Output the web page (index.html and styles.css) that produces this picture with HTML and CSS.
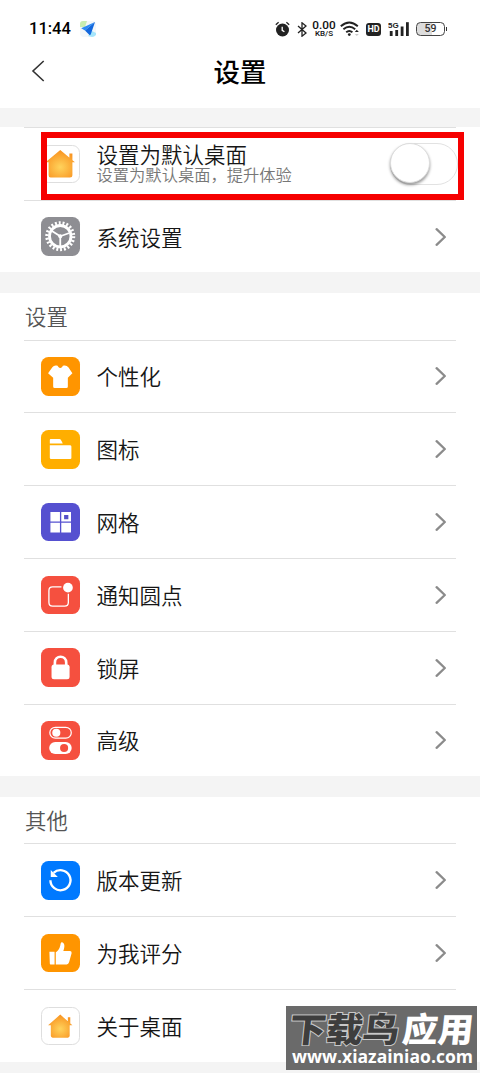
FILE: index.html
```html
<!DOCTYPE html>
<html lang="zh-CN">
<head>
<meta charset="utf-8">
<title>设置</title>
<link rel="stylesheet" href="styles.css">
</head>
<body>
<svg width="0" height="0" class="defs">
  <defs>
    <radialGradient id="glow" cx=".5" cy=".62" r=".6"><stop offset="0" stop-color="#ffd35c"/><stop offset="1" stop-color="#f99421"/></radialGradient>
    <symbol id="chev" viewBox="0 0 12 20"><path d="M1.6 2.2 L9.8 10 L1.6 17.8" fill="none" stroke="#8b8b8b" stroke-width="2.3" stroke-linecap="round" stroke-linejoin="round"/></symbol>
  </defs>
</svg>
<div class="phone">
  <header class="status">
    <span class="time">11:44</span>
    <svg class="plane" width="18" height="18" viewBox="0 0 18 18"><rect x="1" y="1" width="16" height="16" rx="4" fill="#f3f7fa"/><path d="M1 7V4Q1 1 4 1h4L6 7z" fill="#c8edb0"/><path d="M9 16l4-5 4 2v2q-2 2-4 2z" fill="#a5e5fb"/><path d="M16 2L2.2 8.3 6 10.6z" fill="#2a8cf5"/><path d="M16 2L6 10.6l4.2 4.2q1.3.6 1.7-.8z" fill="#1267dd"/></svg>
    <div class="indicators">
      <svg class="alarm" width="15" height="16" viewBox="0 0 15 16"><circle cx="7.5" cy="9" r="6.5" fill="#222"/><path d="M.8 3.7L3.6 1.3M14.2 3.7L11.4 1.3" stroke="#222" stroke-width="1.3"/><path d="M7.2 5.7v3.6l2.2 1.5" fill="none" stroke="#fff" stroke-width="1.3"/></svg>
      <svg class="bt" width="10" height="15" viewBox="0 0 10 15"><path d="M1 4l8 7-4 3.2V.8L9 4l-8 7" fill="none" stroke="#222" stroke-width="1.3"/></svg>
      <span class="speed"><b>0.00</b><i>KB/S</i></span>
      <svg class="wifi" width="20" height="16" viewBox="0 0 20 16"><g fill="none" stroke="#222" stroke-width="1.9"><path d="M.8 5.3q8.5-7.6 17 0"/><path d="M3.4 8.3q5.9-5.1 11.8 0"/><path d="M6.2 11.3q3.1-2.6 6.2 0"/></g><circle cx="9.3" cy="13.6" r="1.4" fill="#222"/><path d="M14.8 11l2-2.2 2 2.2z" fill="#222"/><path d="M14.8 13l2 2 2-2z" fill="#ccc"/></svg>
      <span class="hd">HD</span>
      <svg class="signal" width="22" height="16" viewBox="0 0 22 16"><g fill="#222"><rect x="1.8" y="10" width="2.8" height="5"/><rect x="7.3" y="9" width="2.8" height="6"/><rect x="12.7" y="5.5" width="2.8" height="9.5"/><rect x="18" y="1.2" width="2.8" height="13.8"/></g><text x="0" y="7.4" class="gen">5G</text></svg>
      <span class="battery">59</span>
    </div>
  </header>
  <nav class="bar">
    <svg class="back" width="14" height="22" viewBox="0 0 14 22"><path d="M12.7 1L2 11l10.7 10" fill="none" stroke="#333" stroke-width="1.6"/></svg>
    <h1>设置</h1>
  </nav>

  <section class="group first">
    <div class="row">
      <span class="icon white"><svg viewBox="0 0 38 38"><path d="M28 8.5h3v8h-3zM19 5L33.5 17H31V29.5Q31 32 28.5 32H9.5Q7.5 32 7.5 29.5V17H4.5z" fill="url(#glow)"/></svg></span>
      <div class="label"><span>设置为默认桌面</span><small>设置为默认桌面，提升体验</small></div>
      <span class="switch"><span class="knob"></span></span>
      <div class="highlight"></div>
    </div>
    <div class="row">
      <span class="icon gray"><svg viewBox="0 0 38 38" fill="none" stroke="#fff"><circle cx="19" cy="19" r="13.2" stroke-width="3.2" stroke-dasharray="1.9 1.87"/><circle cx="19" cy="19" r="10.6" stroke-width="2.8"/><path d="M19 19L10.8 13.8M19 19L28 15.8M19 19V29" stroke-width="1.8"/><circle cx="19" cy="19" r="1.5" fill="#fff"/></svg></span>
      <div class="label">系统设置</div><svg class="chev"><use href="#chev"/></svg>
    </div>
  </section>

  <section class="group">
    <h2>设置</h2>
    <div class="row"><span class="icon orange"><svg viewBox="0 0 38 38"><path d="M14.5 8.4Q16.5 8 17 9.5 19 12 21 9.5 21.5 8 23.5 8.4 25.5 8.6 27 10L31 16 26.5 20.5V29Q26.5 30.5 25 30.5H13.5Q12 30.5 12 29V20.5L7 16 11.2 10Q12.5 8.6 14.5 8.4z" fill="#fff"/></svg></span><div class="label">个性化</div><svg class="chev"><use href="#chev"/></svg></div>
    <div class="row"><span class="icon amber"><svg viewBox="0 0 38 38" fill="#fff"><path d="M8.7 9.8Q8.7 9 9.5 9H18Q19.3 9 20 10.4L21.5 13.4H8.7zM8.7 15H28.5Q30 15 30 16.3V27.6Q30 28.7 28.8 28.7H10Q8.7 28.7 8.7 27.4z"/></svg></span><div class="label">图标</div><svg class="chev"><use href="#chev"/></svg></div>
    <div class="row"><span class="icon purple"><svg viewBox="0 0 38 38"><path d="M9.3 9h9.4v9.3H9.3zM20 9h9.6v9.3H20zM9.3 19.6h9.4v9.6H9.3zM20 19.6h9.6v9.6H20z" fill="#fff"/><path d="M22.8 11.8h4.2v4.2h-4.2z" fill="#5550c8"/></svg></span><div class="label">网格</div><svg class="chev"><use href="#chev"/></svg></div>
    <div class="row"><span class="icon red"><svg viewBox="0 0 38 38"><path d="M20.2 10.8H11.5Q7.8 10.8 7.8 14.5V26Q7.8 29.8 11.5 29.8H23.3Q27 29.8 27 26V17.5" fill="none" stroke="#fff" stroke-width="1.3"/><circle cx="26.6" cy="11.5" r="4.8" fill="#fff"/></svg></span><div class="label">通知圆点</div><svg class="chev"><use href="#chev"/></svg></div>
    <div class="row"><span class="icon red"><svg viewBox="0 0 38 38"><rect x="10.4" y="16.4" width="17.8" height="14.4" rx="2.5" fill="#fff"/><path d="M13.7 18V14.5C13.7 6.7 24.9 6.7 24.9 14.5V18" fill="none" stroke="#fff" stroke-width="2.6"/></svg></span><div class="label">锁屏</div><svg class="chev"><use href="#chev"/></svg></div>
    <div class="row"><span class="icon red"><svg viewBox="0 0 38 38"><rect x="8.7" y="6.2" width="21.2" height="10.8" rx="5.4" fill="none" stroke="#fff" stroke-width="1.2"/><circle cx="15.1" cy="11.6" r="4" fill="#fff"/><rect x="8.1" y="20.8" width="22.2" height="11.8" rx="5.9" fill="#fff"/><circle cx="22.8" cy="26.7" r="4" fill="#f5503f"/></svg></span><div class="label">高级</div><svg class="chev"><use href="#chev"/></svg></div>
  </section>

  <section class="group last">
    <h2>其他</h2>
    <div class="row"><span class="icon blue"><svg viewBox="0 0 38 38"><path d="M12.4 11.8A9.9 9.9 0 1 1 9.3 19" fill="none" stroke="#fff" stroke-width="2.3"/><path d="M9.6 9V15.8H16.6z" fill="#fff"/></svg></span><div class="label">版本更新</div><svg class="chev"><use href="#chev"/></svg></div>
    <div class="row"><span class="icon orange"><svg viewBox="0 0 38 38" fill="#fff"><path d="M8.3 17.5H13.4V30H9.4Q8.8 30 8.7 29zM14.6 18C18 16 18.8 12.5 19.2 10.3 19.5 8 21 7.8 22 8.8 24 10.8 22.8 14.5 22 16.8H28.8Q30.6 17 30.2 19L27.7 28Q27.1 30 25.4 30H14.6z"/></svg></span><div class="label">为我评分</div><svg class="chev"><use href="#chev"/></svg></div>
    <div class="row"><span class="icon white"><svg viewBox="0 0 38 38"><path d="M26.5 10h2.4v7h-2.4zM19 7.5L31 18H28.3V28.5Q28.3 30.3 26.5 30.3H11.5Q9.7 30.3 9.7 28.5V18H7z" fill="url(#glow)"/></svg></span><div class="label">关于桌面</div></div>
  </section>

  <div class="watermark">
    <svg width="191" height="64" viewBox="0 0 191 64">
      <g transform="skewX(-6)"><text x="6" y="36" class="wm dark" textLength="110" lengthAdjust="spacingAndGlyphs">下载鸟</text><text x="119" y="36" class="wm light" textLength="71" lengthAdjust="spacingAndGlyphs">应用</text></g>
      <text x="6" y="57" class="url" textLength="181" lengthAdjust="spacingAndGlyphs">www.xiazainiao.com</text>
    </svg>
  </div>
</div>
</body>
</html>
```

FILE: styles.css
```css
* { box-sizing: border-box; }
body { margin: 0; background: #f4f4f4; font-family: "Noto Sans CJK SC", sans-serif; color: #161616; }
.defs { display: block; position: absolute; }
.phone { position: relative; width: 480px; height: 1073px; overflow: hidden; }
.status { display: flex; align-items: center; height: 50px; padding: 8px 35px 0 29px; background: #fff; }
.time { width: 42px; font: 500 16.5px/20px Roboto, sans-serif; color: #000; white-space: nowrap; }
.plane { margin-left: 8px; }
.indicators { display: flex; align-items: center; margin-left: auto; }
.alarm { margin-right: 7px; }
.bt { margin-right: 5px; }
.speed { display: flex; flex-direction: column; align-items: center; width: 24px; margin-right: 4px; font-family: Roboto, sans-serif; color: #111; }
.speed b { font-size: 11.8px; line-height: 9px; font-weight: 500; }
.speed i { font-size: 8px; line-height: 8px; font-style: normal; font-weight: 500; }
.wifi { margin-right: 6px; }
.hd { width: 15px; height: 13px; margin-right: 7px; border-radius: 3px; background: #222; color: #fff; font: 700 9px/13px Roboto, sans-serif; text-align: center; }
.signal { margin-right: 6px; }
.gen { font: 700 8px "Liberation Sans", sans-serif; fill: #222; stroke: #fff; stroke-width: 1px; paint-order: stroke; }
.battery { position: relative; width: 29px; height: 14px; border: 1.3px solid #444; border-radius: 4.5px; background: linear-gradient(90deg, #ddd 57%, #fff 57%); font: 500 10.5px/12px Roboto, sans-serif; text-align: center; color: #333; }
.battery::after { content: ""; position: absolute; right: -3px; top: 4px; width: 1.5px; height: 4px; background: #333; }
.bar { display: grid; grid-template-columns: 60px 1fr 60px; align-items: center; height: 57.5px; padding-bottom: 16px; background: #fff; }
.back { margin-left: 31px; }
h1 { margin: 0; font-size: 26.4px; line-height: 40px; font-weight: 500; text-align: center; color: #000; }
.group { margin-bottom: 20.5px; padding: 0 24px; background: #fff; }
.first { margin-top: 19.4px; }
.last { margin-bottom: 0; }
h2 { height: 46.6px; margin: 0; padding-left: 1px; font-size: 21.4px; line-height: 46px; font-weight: 350; color: #555; }
.row { position: relative; display: flex; align-items: center; height: 72.8px; padding: 0 9px 0 17px; border-top: 1px solid #e0e0e0; }
.icon { flex: none; width: 38.5px; height: 38.5px; margin-right: 17px; border-radius: 7.5px; overflow: hidden; }
.icon svg { display: block; width: 38.5px; height: 38.5px; }
.white { background: #fff; border: 1px solid #dedede; }
.white svg { margin: -1px; }
.gray { background: #8e8e93; }
.orange { background: #ff9500; }
.amber { background: #ffae00; }
.purple { background: #5550d0; }
.red { background: #f5503f; }
.blue { background: #0079ff; }
.label { flex: 1; display: flex; flex-direction: column; font-size: 21.5px; line-height: 30px; font-weight: 350; white-space: nowrap; }
.label small { font-size: 16.3px; line-height: 19px; font-weight: 350; color: #777; }
.label span { line-height: 22px; }
.chev { width: 12px; height: 20px; }
.switch { width: 68px; height: 42px; margin-right: -11px; border: 1.5px solid #e2e2e2; border-radius: 21px; background: #fff; }
.knob { display: block; width: 40px; height: 40px; margin: -1px 0 0 -1px; border-radius: 50%; background: #fff; border: 1px solid #ddd; box-shadow: 0 2px 3px rgba(0,0,0,.4); }
.highlight { position: absolute; z-index: 1; left: 17px; top: 4px; width: 423px; height: 68px; border: 6px solid #f60000; }
.watermark { position: absolute; left: 286px; top: 1006px; width: 191px; height: 64px; background: #6a6a6a; }
.watermark svg { display: block; }
.wm { font: 900 34px "Noto Sans CJK SC", sans-serif; paint-order: stroke; }
.dark { fill: #3e3e3e; stroke: #c8c8c8; stroke-width: 2px; }
.light { fill: #fff; }
.url { font: 700 18px "Open Sans", sans-serif; fill: #fff; }
```
